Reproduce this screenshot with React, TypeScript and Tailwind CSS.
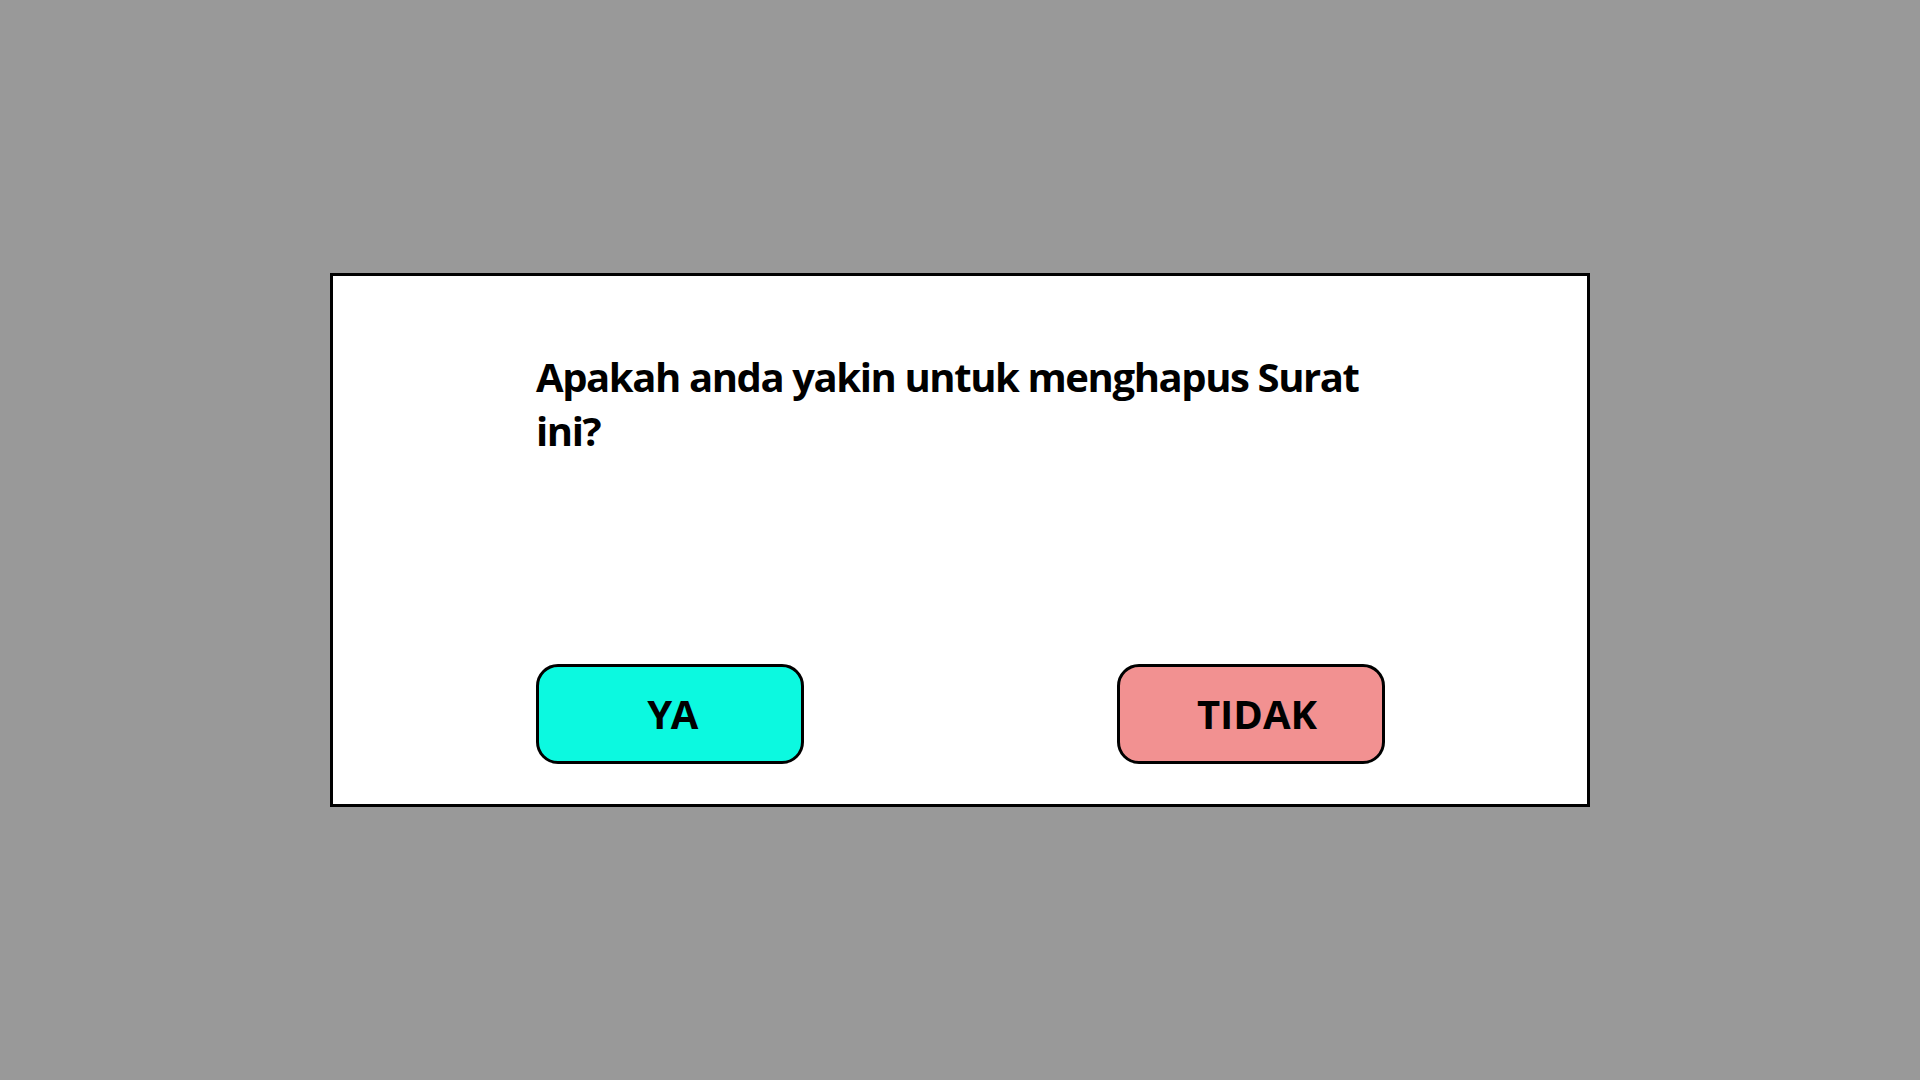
import React from "react";

export default function App() {
  return (
    <div className="w-[1920px] h-[1080px] bg-[#999999] flex items-start justify-start" style={{ fontFamily: '"Open Sans", "Noto Sans", sans-serif' }}>
      <div className="mt-[273px] ml-[330px] w-[1260px] h-[534px] bg-white border-[3px] border-black flex flex-col pl-[203px] pt-[74px]">
        <p className="w-[900px] text-[40px] leading-[54px] tracking-[-1.4px] font-bold text-black">
          Apakah anda yakin untuk menghapus Surat
          <br />
          ini?
        </p>
        <div className="mt-auto mb-[40px] flex gap-[313px]">
          <button className="w-[268px] h-[100px] rounded-[22px] border-[3px] border-black bg-[#0cf9e0] text-[40px] tracking-[-1.5px] font-bold text-black flex items-center justify-center pl-[4px]">
            YA
          </button>
          <button className="w-[268px] h-[100px] rounded-[22px] border-[3px] border-black bg-[#f29191] text-[40px] font-bold text-black flex items-center justify-center pl-[12px]">
            TIDAK
          </button>
        </div>
      </div>
    </div>
  );
}
